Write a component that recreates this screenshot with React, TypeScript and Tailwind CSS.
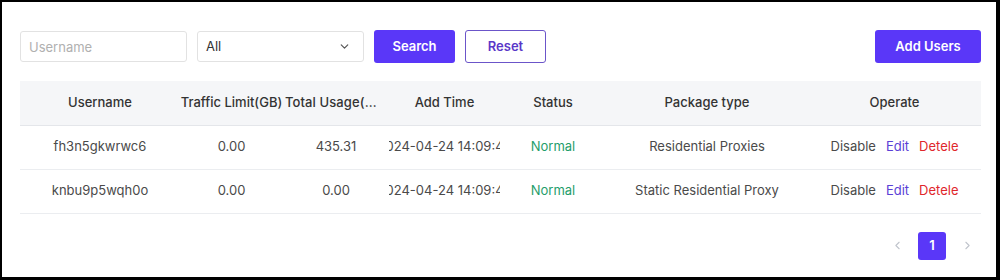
import { ChevronDown, ChevronLeft, ChevronRight } from "lucide-react";

const rows = [
    { name: "fh3n5gkwrwc6", limit: "0.00", usage: "435.31", time: "2024-04-24 14:09:45", status: "Normal", pkg: "Residential Proxies" },
    { name: "knbu9p5wqh0o", limit: "0.00", usage: "0.00", time: "2024-04-24 14:09:45", status: "Normal", pkg: "Static Residential Proxy" },
];

const font = { fontFamily: "Inter, 'Noto Sans', sans-serif" };

const App = () => {
    return (
        <div
            className="h-[280px] w-[1000px] border-t-2 border-l-2 border-r-4 border-b-[3px] border-black bg-white pl-[18px] pr-[15px] pt-[28px]"
            style={font}
        >
            <div className="flex items-center h-[33px]">
                <input
                    placeholder="Username"
                    className="h-[31px] w-[167px] rounded-[3px] border border-[#e2e2e2] px-2 text-[13px] text-[#333] placeholder:text-[#b0b0b0] outline-none"
                />
                <div className="ml-[10px] flex h-[31px] w-[167px] items-center justify-between rounded-[3px] border border-[#e2e2e2] pl-2 pr-3 text-[13px] text-[#333]">
                    <span>All</span>
                    <ChevronDown size={13} strokeWidth={2.2} className="text-[#555]" />
                </div>
                <button className="ml-[10px] h-[33px] w-[81px] rounded-[3px] bg-[#5a37f8] text-[13px] font-semibold text-white">
                    Search
                </button>
                <button className="ml-[10px] h-[33px] w-[81px] rounded-[3px] border border-[#6b55c9] bg-white text-[13px] font-semibold text-[#5a37c8]">
                    Reset
                </button>
                <button className="ml-auto h-[33px] w-[106px] rounded-[3px] bg-[#5a37f8] text-[13px] font-semibold text-white">
                    Add Users
                </button>
            </div>

            <table className="mt-[18px] w-[961px] table-fixed border-collapse text-[13px]">
                <colgroup>
                    <col className="w-[160px]" />
                    <col className="w-[103px]" />
                    <col className="w-[106px]" />
                    <col className="w-[111px]" />
                    <col className="w-[106px]" />
                    <col className="w-[202px]" />
                    <col className="w-[173px]" />
                </colgroup>
                <thead>
                    <tr className="h-[44px] bg-[#f5f6f8] border-b border-[#e4e6ea] font-medium text-[#333]">
                        <th className="font-medium">Username</th>
                        <th className="font-medium whitespace-nowrap overflow-hidden">Traffic Limit(GB)</th>
                        <th className="font-medium whitespace-nowrap overflow-hidden text-ellipsis px-[2px] tracking-[0.1px]">Total Usage(MB)</th>
                        <th className="font-medium">Add Time</th>
                        <th className="font-medium">Status</th>
                        <th className="font-medium">Package type</th>
                        <th className="font-medium">Operate</th>
                    </tr>
                </thead>
                <tbody>
                    {rows.map((r) => (
                        <tr key={r.name} className="h-[44px] border-b border-[#ebedf0] text-center text-[#4a4a4a]">
                            <td>{r.name}</td>
                            <td>{r.limit}</td>
                            <td>{r.usage}</td>
                            <td className="overflow-hidden">
                                <div className="flex justify-center whitespace-nowrap">{r.time}</div>
                            </td>
                            <td className="text-[#1f9d6b]">{r.status}</td>
                            <td>{r.pkg}</td>
                            <td>
                                <span className="text-[#4a4a4a]">Disable</span>
                                <span className="ml-[10px] text-[#5b3fd6]">Edit</span>
                                <span className="ml-[10px] text-[#e0262b]">Detele</span>
                            </td>
                        </tr>
                    ))}
                </tbody>
            </table>

            <div className="mt-[18px] flex w-[961px] justify-end gap-[7px]">
                <button className="flex h-[28px] w-[28px] items-center justify-center text-[#c0c4cc]">
                    <ChevronLeft size={13} />
                </button>
                <button className="h-[28px] w-[28px] rounded-[3px] bg-[#5a37f8] text-[13px] font-semibold text-white">
                    1
                </button>
                <button className="flex h-[28px] w-[28px] items-center justify-center text-[#c0c4cc]">
                    <ChevronRight size={13} />
                </button>
            </div>
        </div>
    );
};

export default App;
